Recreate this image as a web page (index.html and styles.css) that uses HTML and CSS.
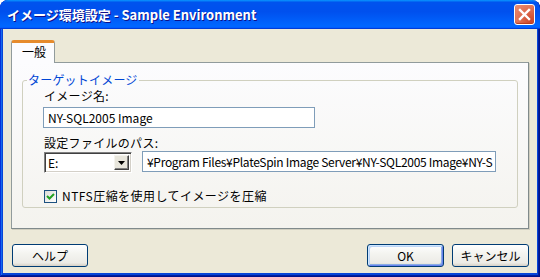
FILE: index.html
```html
<!DOCTYPE html>
<html lang="ja">
<head>
<meta charset="utf-8">
<title>イメージ環境設定</title>
<link rel="stylesheet" href="styles.css">
</head>
<body>
<div class="window">
  <div class="titlebar">
    <span class="title">イメージ環境設定 - Sample Environment</span>
    <span class="close"><svg width="13" height="13" viewBox="0 0 13 13"><path d="M2 2 L11 11 M11 2 L2 11" stroke="#fff" stroke-width="2.4" stroke-linecap="square"/></svg></span>
  </div>
  <div class="client">
    <div class="tabs"><div class="tab">一般</div></div>
    <div class="panel">
      <fieldset class="group">
        <legend>ターゲットイメージ</legend>
        <div class="group-body">
          <div class="lbl first">イメージ名:</div>
          <div class="textbox name">NY-SQL2005 Image</div>
          <div class="lbl second">設定ファイルのパス:</div>
          <div class="row">
            <div class="combo"><span class="combo-val">E:</span><span class="drop"><svg width="7" height="4" viewBox="0 0 7 4"><path d="M0 0 H7 L3.5 4 Z" fill="#000"/></svg></span></div>
            <div class="textbox path">¥Program Files¥PlateSpin Image Server¥NY-SQL2005 Image¥NY-S</div>
          </div>
          <div class="check"><span class="box"><svg width="11" height="11" viewBox="0 0 11 11"><path d="M2 5 L4.5 7.5 L9 3" stroke="#21A121" stroke-width="2" fill="none"/></svg></span><span class="check-lbl">NTFS圧縮を使用してイメージを圧縮</span></div>
        </div>
      </fieldset>
    </div>
    <div class="buttons">
      <div class="btn help">ヘルプ</div>
      <div class="spacer"></div>
      <div class="btn default">OK</div>
      <div class="btn">キャンセル</div>
    </div>
  </div>
</div>
</body>
</html>
```
FILE: styles.css
```css
html, body { margin: 0; padding: 0; background: #fff; }
body { font-family: "Noto Sans CJK JP", "Liberation Sans", sans-serif; font-size: 12px; color: #000; }

.window {
  width: 540px; height: 277px; box-sizing: border-box;
  display: flex; flex-direction: column;
  background: #0845D8;
  border-radius: 8px 8px 0 0;
  box-shadow: inset -1px -1px #00138c, inset 1px 0 #0831d9, inset -2px -2px #001ea0, inset 2px 0 #166aee;
  overflow: hidden;
}
.titlebar {
  height: 29px; flex: none; display: flex; align-items: center;
  padding: 0 5px 0 7px;
  border-radius: 8px 8px 0 0;
  background: linear-gradient(180deg, #0997ff, #0053ee 8%, #0050ee 40%, #0066ff 88%, #0066ff 93%, #005bff 95%, #003dd7 96%, #003dd7);
}
.title {
  flex: 1; color: #fff; font-weight: bold; font-size: 13px; line-height: 16px;
  text-shadow: 1px 1px #0f1089; white-space: nowrap;
}
.close {
  width: 19px; height: 19px; border: 1px solid #fff; border-radius: 3px;
  background: radial-gradient(circle at 85% 85%, #cc4628 0, #dc6a4d 45%, #e9896f 90%);
  box-shadow: inset 0 -1px 1px #b63a1c;
  display: flex; align-items: center; justify-content: center;
}
.client {
  flex: 1; margin: 0 3px 4px 3px; background: #ECE9D8;
  padding: 11px 8px 0 8px; display: flex; flex-direction: column;
}
.tabs { display: flex; height: 22px; }
.tab {
  position: relative; z-index: 1;
  width: 44px; box-sizing: border-box; margin-bottom: -1px; height: 23px;
  border: 1px solid #919B9C; border-bottom: none; border-top: 3px solid #E68B2C;
  border-radius: 3px 3px 0 0;
  background: #FCFCFE;
  padding: 2px 0 0 10px; line-height: 14px; font-size: 12px;
}
.panel {
  height: 167px; box-sizing: border-box;
  border: 1px solid #919B9C;
  border-right-color: #808A8B; border-bottom-color: #808A8B;
  box-shadow: 1px 1px 0 #D0CEBF;
  background: linear-gradient(180deg, #FCFCFE 0%, #F4F3EE 100%);
  padding: 10px 10px 0 10px;
}
.group {
  margin: 0; padding: 0; height: 135px; box-sizing: border-box;
  border: 1px solid #D0D0BF; border-radius: 3px;
}
.group legend {
  color: #0046D5; padding: 0 1px; margin-left: 4px; line-height: 14px; font-size: 12px;
  letter-spacing: 0.2px;
}
.group-body { padding: 0 0 0 20px; }
.lbl { line-height: 14px; padding-left: 1px; letter-spacing: 0.3px; }
.lbl.first { margin-top: 2px; }
.lbl.second { margin-top: 8px; }
.textbox {
  height: 21px; box-sizing: border-box; border: 1px solid #7F9DB9; background: #fff;
  padding: 2px 4px; line-height: 15px; white-space: nowrap; overflow: hidden;
}
.textbox.name { width: 272px; margin-top: 4px; }
.row { display: flex; margin-top: 1px; gap: 10px; }
.textbox.path { width: 354px; padding: 2px 1px 2px 4px; letter-spacing: -0.3px; }
.combo {
  width: 88px; height: 21px; box-sizing: border-box; margin-left: 1px; margin-top: 1px;
  background: #fff; display: flex;
  border-top: 1px solid #808080; border-left: 1px solid #808080;
  border-right: 1px solid #fff; border-bottom: 1px solid #fff;
  box-shadow: inset 1px 1px #404040, inset -1px -1px #D4D0C8;
}
.combo-val { flex: 1; padding: 2px 0 0 3px; line-height: 15px; }
.drop {
  width: 15px; height: 15px; margin: 2px 2px 0 0; box-sizing: border-box;
  background: #E8E6DC;
  border-top: 1px solid #f4f3ee; border-left: 1px solid #f4f3ee;
  border-right: 1px solid #404040; border-bottom: 1px solid #404040;
  box-shadow: inset -1px -1px #808080;
  display: flex; align-items: center; justify-content: center;
}
.check { display: flex; align-items: center; margin-top: 16px; line-height: 14px; padding-left: 1px; }
.check-lbl { letter-spacing: 0.45px; }
.box {
  width: 13px; height: 13px; box-sizing: border-box; border: 1px solid #1C5180;
  background: linear-gradient(135deg, #DCDCD7, #fff);
  display: flex; align-items: center; justify-content: center; margin-right: 5px;
}
.buttons { display: flex; margin-top: 15px; gap: 8px; padding-left: 1px; }
.spacer { flex: 1; }
.btn {
  width: 77px; height: 23px; box-sizing: border-box;
  border: 1px solid #003C74; border-radius: 3px;
  background: linear-gradient(180deg, #fff 0%, #F4F4F0 40%, #ECEBE6 85%, #D6D0C5 100%);
  display: flex; align-items: center; justify-content: center; line-height: 14px;
}
.btn.default { box-shadow: inset 1px 1px #CEE7FF, inset -1px -1px #6982EE, inset 2px 2px #BCD4F6, inset -2px -2px #89ADE4; }
.btn.help { width: 76px; }
```
